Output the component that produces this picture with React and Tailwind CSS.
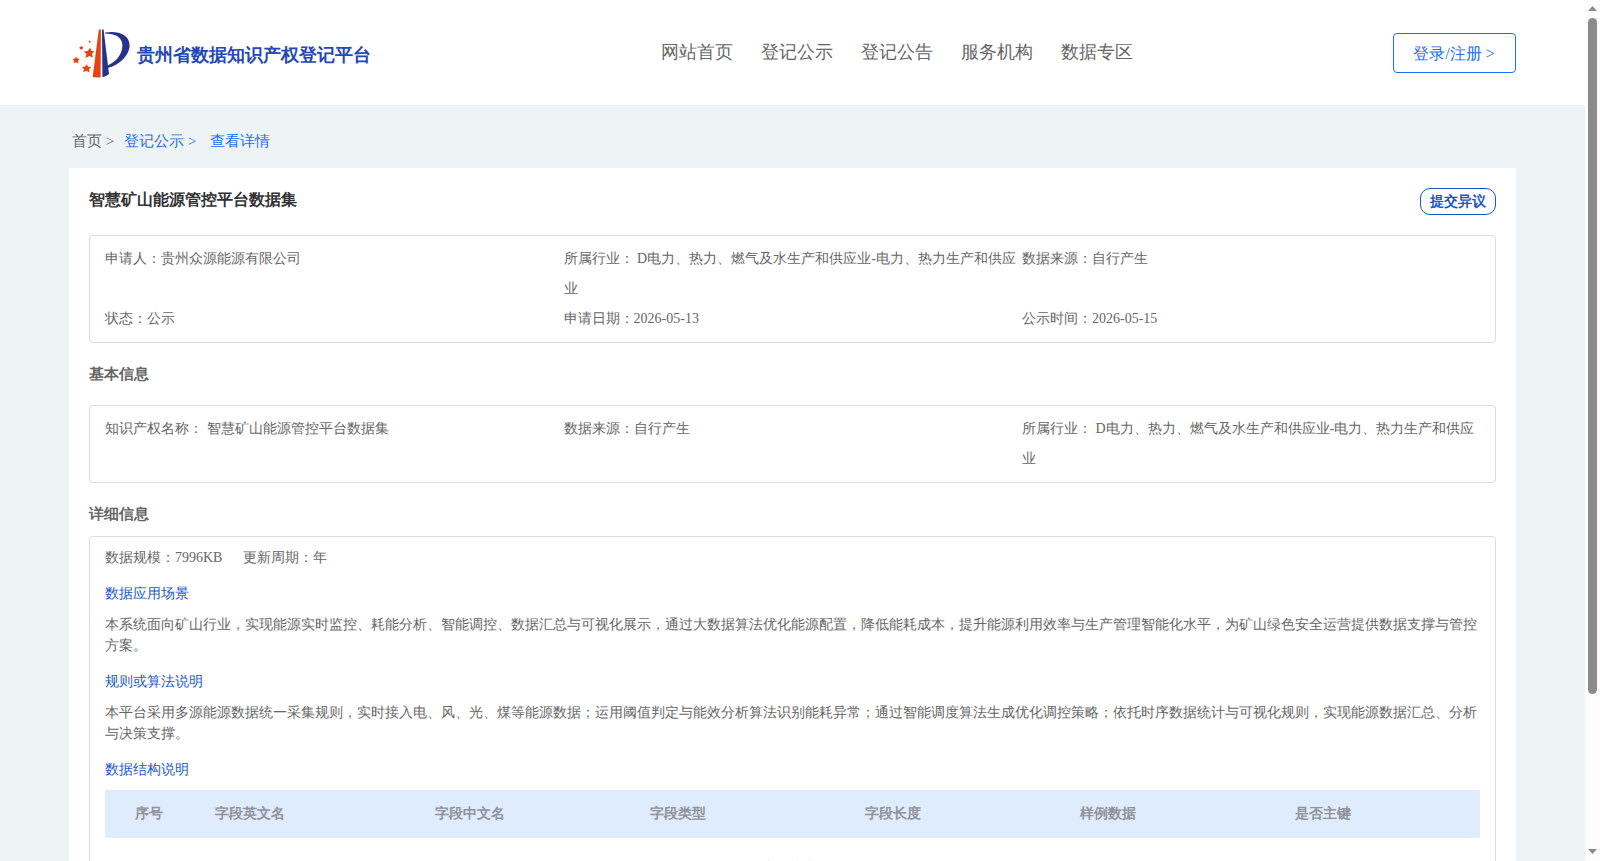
const NAV = ["网站首页", "登记公示", "登记公告", "服务机构", "数据专区"];
const INDUSTRY = "所属行业： D电力、热力、燃气及水生产和供应业-电力、热力生产和供应业";

function Logo() {
  return (
    <svg width="60" height="52" viewBox="0 0 60 52" className="mt-0.5 block shrink-0">
      <path d="M27.8 1.5 L29.9 1.5 L29.6 49.2 Q26 49.8 21.7 49 Z" fill="#e8430f" />
      <path d="M31 1.5 L32.6 1.5 L38 46 Q35 48.6 31.4 49.2 Z" fill="#283189" />
      <path
        d="M34 4.6 C46 2.4 58.4 6 58.6 17.2 C58.4 29 46 38 36.5 40 L36 37.8 C44 34.5 51.6 27 51.4 17 C51 8.5 43.5 5.6 34 5.5 Z"
        fill="#283189"
      />
      <g fill="#e8430f">
        <path d="M19.2 19.4 L20.4 22.8 L23.4 23.4 L21 25.8 L21.9 29.8 L18.4 28 L14.4 30 L15.5 26.2 L12.8 23.4 L16.8 23 Z" />
        <path d="M5 28.4 L6.2 30.6 L8.8 30.8 L7.1 32.7 L7.4 35.2 L5.1 34.2 L2.6 35.2 L3.2 32.8 L1.4 31 L4 30.6 Z" />
        <path d="M15.9 36.2 L17 38.8 L20.4 39 L18 41 L18.6 44.4 L15.3 42.8 L12 44.2 L13 41.2 L10.8 38.8 L14 38.8 Z" />
        <path d="M10.2 18.2 L12.2 19 L11.6 21.2 L9.4 21.6 L8.2 19.6 Z" />
        <path d="M18.7 12.6 L19.8 13.2 L19.3 14.6 L17.9 14.4 L17.6 13.2 Z" />
      </g>
    </svg>
  );
}

function Scrollbar() {
  return (
    <div className="flex w-[15px] shrink-0 flex-col items-center bg-[#fcfcfc]">
      <svg width="15" height="18" className="block shrink-0">
        <path d="M3 11 L12 11 L7.5 6 Z" fill="#8b8b8b" />
      </svg>
      <div className="h-[676px] w-[9px] rounded-full bg-[#8b8b8b]" />
      <svg width="15" height="18" className="mt-auto block shrink-0">
        <path d="M3 6 L12 6 L7.5 11 Z" fill="#8b8b8b" />
      </svg>
    </div>
  );
}

function InfoBox({ items }) {
  return (
    <div className="grid grid-cols-[458.6px_458.4px_1fr] rounded-[4px] border border-[#dcdcdc] py-2 pr-3.5 pl-[15px] text-sm leading-[30px]">
      {items.map((t) => (
        <div key={t}>{t}</div>
      ))}
    </div>
  );
}

function SubTitle({ children }) {
  return <h3 className="text-sm leading-[21px] text-[#1a5ac8]">{children}</h3>;
}

export default function App() {
  return (
    <div className="flex h-[861px] w-[1600px] overflow-hidden bg-[#eef3f6] font-['Liberation_Serif',serif] text-[#666]">
      <div className="min-w-0 flex-1">
        <header className="flex h-[105px] items-center justify-between bg-white pr-[69px] pl-[71px]">
          <div className="flex w-[322px] items-center gap-1.5">
            <Logo />
            <span className="mt-1 text-lg font-bold whitespace-nowrap text-[#2448b8]">贵州省数据知识产权登记平台</span>
          </div>
          <nav className="mr-[-7px] flex gap-7 pb-0.5 text-lg">
            {NAV.map((n) => (
              <a key={n}>{n}</a>
            ))}
          </nav>
          <button className="h-10 w-[123px] rounded-[4px] border border-[#1a6ff5] pt-0.5 pr-px text-base text-[#1a6ff5]">登录/注册 &gt;</button>
        </header>

        <div className="flex h-[63px] items-center pt-[9px] pl-[72px] text-[15px]">
          <span>首页 &gt;</span>
          <span className="ml-2.5 text-[#1a6ff5]">登记公示 &gt;</span>
          <span className="ml-3.5 text-[#1a6ff5]">查看详情</span>
        </div>

        <main className="mr-[69px] ml-[69px] h-[720px] bg-white px-5 pt-5">
          <div className="flex h-[47px] items-start justify-between">
            <h1 className="text-base leading-6 font-bold text-[#333]">智慧矿山能源管控平台数据集</h1>
            <button className="h-[27px] w-[76px] rounded-[10px] border border-[#1a56c4] text-sm leading-[25px] font-bold text-[#1a56c4]">
              提交异议
            </button>
          </div>
          <InfoBox
            items={["申请人：贵州众源能源有限公司", INDUSTRY, "数据来源：自行产生", "状态：公示", "申请日期：2026-05-13", "公示时间：2026-05-15"]}
          />
          <h2 className="h-[62px] text-[15px] leading-[62px] font-bold">基本信息</h2>
          <InfoBox items={["知识产权名称： 智慧矿山能源管控平台数据集", "数据来源：自行产生", INDUSTRY]} />
          <h2 className="h-[53px] text-[15px] leading-[62px] font-bold">详细信息</h2>
          <section className="h-[360px] rounded-[4px] border border-[#dcdcdc] px-[15px] pt-2.5 text-sm leading-[21px]">
            <div className="flex gap-[21px]">
              <span>数据规模：7996KB</span>
              <span>更新周期：年</span>
            </div>
            <div className="mt-[15px]">
              <SubTitle>数据应用场景</SubTitle>
              <p className="mt-2.5">
                本系统面向矿山行业，实现能源实时监控、耗能分析、智能调控、数据汇总与可视化展示，通过大数据算法优化能源配置，降低能耗成本，提升能源利用效率与生产管理智能化水平，为矿山绿色安全运营提供数据支撑与管控方案。
              </p>
            </div>
            <div className="mt-[15px]">
              <SubTitle>规则或算法说明</SubTitle>
              <p className="mt-2.5">
                本平台采用多源能源数据统一采集规则，实时接入电、风、光、煤等能源数据；运用阈值判定与能效分析算法识别能耗异常；通过智能调度算法生成优化调控策略；依托时序数据统计与可视化规则，实现能源数据汇总、分析与决策支撑。
              </p>
            </div>
            <div className="mt-[15px]">
              <SubTitle>数据结构说明</SubTitle>
              <div className="mt-2.5 grid h-12 grid-cols-[80px_220px_215px_215px_215px_215px_1fr] items-center border-b border-[#ebeef5] bg-[#dfecfe] pl-[30px] font-bold text-[#909399]">
                <span>序号</span>
                <span>字段英文名</span>
                <span>字段中文名</span>
                <span>字段类型</span>
                <span>字段长度</span>
                <span>样例数据</span>
                <span>是否主键</span>
              </div>
              <div className="h-[60px] text-center leading-[60px] text-[#909399]">暂无数据</div>
            </div>
          </section>
        </main>
      </div>
      <Scrollbar />
    </div>
  );
}
